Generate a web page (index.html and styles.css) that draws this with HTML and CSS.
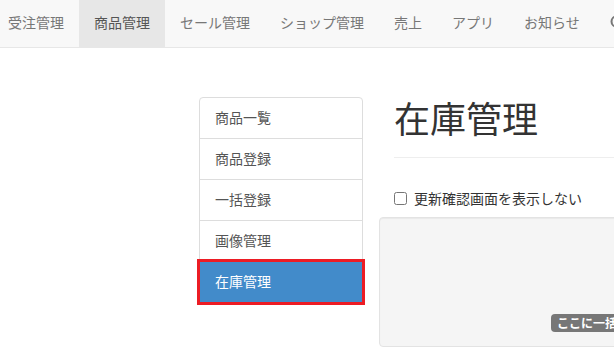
FILE: index.html
```html
<!DOCTYPE html>
<html lang="ja">

<head>
  <meta charset="UTF-8">
  <title>在庫管理</title>
  <link rel="stylesheet" href="styles.css">
</head>

<body>
  <nav class="navbar">
    <ul class="nav-menu">
      <li><a href="#">受注管理</a></li>
      <li class="active"><a href="#">商品管理</a></li>
      <li><a href="#">セール管理</a></li>
      <li><a href="#">ショップ管理</a></li>
      <li><a href="#">売上</a></li>
      <li><a href="#">アプリ</a></li>
      <li><a href="#">お知らせ</a></li>
      <li class="search">
        <a href="#">
          <svg width="16" height="16" viewBox="0 0 16 16">
            <circle cx="6.5" cy="6.5" r="5" fill="none" stroke="#777" stroke-width="2" />
            <line x1="10.2" y1="10.2" x2="14.5" y2="14.5" stroke="#777" stroke-width="2.4" stroke-linecap="round" />
          </svg>
        </a>
      </li>
    </ul>
  </nav>

  <div class="page">
    <aside class="sidebar">
      <div class="list-group">
        <a href="#" class="list-group-item">商品一覧</a>
        <a href="#" class="list-group-item">商品登録</a>
        <a href="#" class="list-group-item">一括登録</a>
        <a href="#" class="list-group-item">画像管理</a>
        <a href="#" class="list-group-item active">在庫管理</a>
      </div>
    </aside>

    <main class="content">
      <h1 class="page-header">在庫管理</h1>
      <label class="check">
        <input type="checkbox">
        <span>更新確認画面を表示しない</span>
      </label>
      <div class="well">
        <span class="label">ここに一括登録するファイルをドロップしてください</span>
      </div>
    </main>
  </div>
</body>

</html>
```

FILE: styles.css
```css
body {
  font-family: "Noto Sans CJK JP", "Noto Sans", "Liberation Sans", sans-serif;
  margin: 0;
  font-size: 14px;
  color: #333;
  background: #fff;
  overflow: hidden;
}

a {
  text-decoration: none;
}

/* ナビゲーション */
.navbar {
  background: #f8f8f8;
  border-bottom: 1px solid #e7e7e7;
  height: 47px;
  overflow: hidden;
}

.nav-menu {
  list-style: none;
  margin: 0;
  padding: 0;
  display: flex;
  white-space: nowrap;
}

.nav-menu a {
  display: block;
  padding: 12px 15px 15px 15px;
  line-height: 20px;
  color: #777;
}

.nav-menu li:first-child a {
  padding-left: 8px;
}

.nav-menu .active a {
  background: #e7e7e7;
  color: #555;
}

.nav-menu .search a {
  padding-top: 15px;
  padding-bottom: 12px;
}

.nav-menu .search svg {
  display: block;
}

/* レイアウト */
.page {
  display: flex;
  gap: 16px;
  padding-top: 49px;
  padding-left: 199px;
}

.sidebar {
  flex: 0 0 164px;
}

.list-group {
  display: flex;
  flex-direction: column;
}

.list-group-item {
  display: block;
  padding: 9px 15px 11px 15px;
  line-height: 20px;
  color: #555;
  border: 1px solid #ddd;
  margin-bottom: -1px;
  background: #fff;
  position: relative;
}

.list-group-item:first-child {
  border-top-left-radius: 4px;
  border-top-right-radius: 4px;
}

.list-group-item.active {
  background: #428bca;
  border-color: #428bca;
  color: #fff;
  outline: 3px solid #ec1c24;
  outline-offset: -1px;
  z-index: 2;
}

.content {
  flex: 1 0 400px;
}

.page-header {
  margin: 0 0 0 15px;
  padding: 0 0 20px 0;
  border-bottom: 1px solid #eee;
  font-size: 36px;
  font-weight: 400;
  line-height: 40px;
  color: #333;
}

.check {
  display: flex;
  align-items: center;
  gap: 7px;
  margin: 30px 0 0 15px;
  line-height: 20px;
  color: #333;
}

.check input {
  margin: 0;
  width: 13px;
  height: 13px;
}

.well {
  margin-top: 9px;
  height: 130px;
  background: #f5f5f5;
  border: 1px solid #e3e3e3;
  border-radius: 4px;
  box-shadow: inset 0 1px 1px rgba(0, 0, 0, 0.05);
  display: flex;
  align-items: flex-end;
  padding-left: 171px;
  padding-bottom: 14px;
  box-sizing: border-box;
  white-space: nowrap;
}

.label {
  display: inline-block;
  background: #777;
  color: #fff;
  font-size: 12px;
  font-weight: 700;
  line-height: 18px;
  padding: 0 6px;
  border-radius: 4px;
}
```
